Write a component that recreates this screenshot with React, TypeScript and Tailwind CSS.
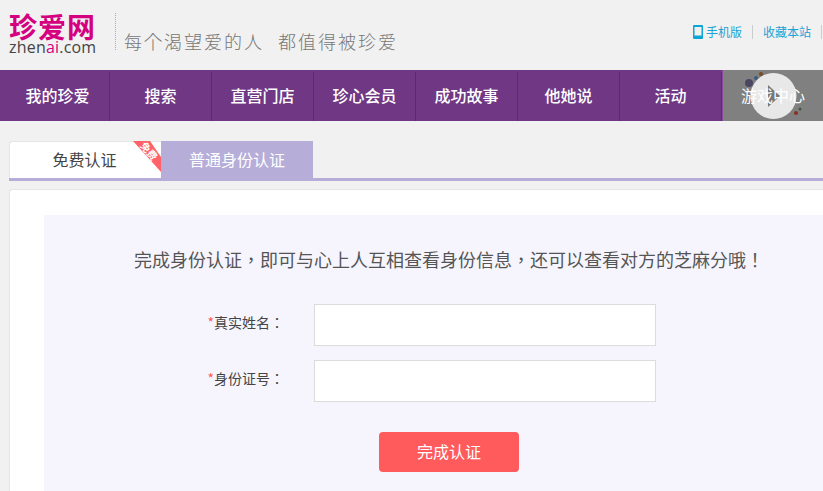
const cjk = "font-['Noto_Sans_CJK_SC',sans-serif]";

const navItems = [
  { label: "我的珍爱", width: "w-[110px]", pad: "pl-[6px]" },
  { label: "搜索", width: "w-[102px]", pad: "" },
  { label: "直营门店", width: "w-[102px]", pad: "" },
  { label: "珍心会员", width: "w-[102px]", pad: "" },
  { label: "成功故事", width: "w-[102px]", pad: "" },
  { label: "他她说", width: "w-[102px]", pad: "" },
  { label: "活动", width: "w-[102px]", pad: "" },
];

// centred full-width punctuation, the SC font sets it to the left of its cell
function Punct({ children }: { children: string }) {
  return <span className="font-['Noto_Sans_CJK_TC',sans-serif]">{children}</span>;
}

function Header() {
  return (
    <div className="flex h-[70px] items-start bg-[#f1f1f1]">
      <div className="ml-[9px] mt-[12px] w-[90px]">
        <div className="text-[28px] font-bold leading-[28px] tracking-[1px] whitespace-nowrap text-[#d4007f] font-['Noto_Sans_CJK_SC',serif]">
          珍爱网
        </div>
        <div className="text-[16px] leading-[14px] tracking-[0.2px] text-[#444] font-['Open_Sans',sans-serif]">
          zhen<span className="text-[#d4007f]">ai</span>.com
        </div>
      </div>
      <div className="ml-[16px] mt-[13px] h-[37px] border-l border-dotted border-[#aaa]" />
      <div className="ml-[8px] mt-[29px] whitespace-nowrap text-[18px] leading-6 tracking-[2px] text-[#777] font-['Noto_Sans_CJK_JP',sans-serif] font-light">
        每个渴望爱的人<span className="ml-[14px]">都值得被珍爱</span>
      </div>
      <div className="ml-auto mt-[24px] flex items-center text-xs leading-4 text-[#1ba3d6]">
        <svg width="10" height="14" viewBox="0 0 10 14" className="mr-[3px]">
          <path d="M1 0h8a1 1 0 0 1 1 1v12a1 1 0 0 1-1 1H1a1 1 0 0 1-1-1V1a1 1 0 0 1 1-1zm.5 2v8.500h7V2z" fill="#0ca6d6" fillRule="evenodd" />
        </svg>
        <span>手机版</span>
        <span className="mx-[10px] h-[14px] border-l border-[#ccc]" />
        <span>收藏本站</span>
        <span className="ml-[10px] mr-px h-[14px] border-l border-[#ccc]" />
      </div>
    </div>
  );
}

function Nav() {
  return (
    <div className="flex h-[51px] bg-[#6f3784] text-base font-medium text-white">
      {navItems.map((item) => (
        <div key={item.label} className={`${item.width} ${item.pad} mt-[2px] flex items-center justify-center border-r border-[#5b2a6f] pb-[4px]`}>
          {item.label}
        </div>
      ))}
      <div className="relative flex flex-1 items-center justify-center border-l border-[#8a4aa0] bg-[#808080]">
        <svg width="60" height="51" viewBox="0 0 60 51" className="absolute left-[21px] top-0">
          <circle cx="5" cy="13" r="4" fill="#4c4560" />
          <circle cx="12" cy="8" r="2" fill="#3d5a78" />
          <circle cx="17" cy="4" r="2" fill="#7a4a20" />
          <circle cx="56" cy="39" r="1.500" fill="#3d5a40" />
          <circle cx="52" cy="43" r="2" fill="#8a3020" />
          <circle cx="29.500" cy="26" r="23" fill="#fff" fillOpacity="0.82" />
          <path d="M24 15l12 11-12 11z" fill="#777" />
        </svg>
        <span className="relative pb-[1px] font-normal">游戏中心</span>
      </div>
    </div>
  );
}

function Tabs() {
  return (
    <div className="ml-[9px] mt-5 flex h-[40px] border-b-[3px] border-[#b6aed8]">
      <div className="relative flex h-[37px] w-[152px] items-center justify-center rounded-tl-sm border-l border-t border-[#e6e6e6] bg-white pr-[2px] pb-[2px] text-base text-[#444]">
        免费认证
        <div className="absolute -top-px right-0 h-[31px] w-[28px] bg-[#ff6268] [clip-path:polygon(0_0,17px_0,28px_16px,28px_31px)]" />
        <div className="absolute left-[127px] top-[3px] flex h-[12px] w-[24px] rotate-[50deg] items-center justify-center text-[10px] font-bold leading-none text-white">
          免费
        </div>
      </div>
      <div className="flex h-[37px] w-[152px] items-center justify-center bg-[#b6aed8] pb-[2px] text-base text-white">
        普通身份认证
      </div>
    </div>
  );
}

function Field({ label }: { label: string }) {
  return (
    <div className="flex h-[42px] items-center">
      <div className="w-[141px] pb-[6px] text-right text-sm text-[#444]">
        <span className="text-[#ff5a5c]">*</span>
        {label}
        <Punct>：</Punct>
      </div>
      <input aria-label={label} className="ml-[30px] h-[42px] w-[342px] border border-[#dcdcdc] bg-white" />
    </div>
  );
}

export default function App() {
  return (
    <div className={`${cjk} h-[491px] w-[823px] overflow-hidden bg-[#f1f1f1]`}>
      <Header />
      <Nav />
      <Tabs />
      <div className="ml-[9px] mt-2 w-[880px] rounded-t border-l border-t border-[#e6e6e6] bg-white pl-[34px] pt-[25px]">
        <div className="h-[300px] w-[810px] bg-[#f6f5fe] pt-[32px]">
          <p className="whitespace-nowrap text-center text-[18px] leading-6 text-[#555]">
            完成身份认证<Punct>，</Punct>即可与心上人互相查看身份信息<Punct>，</Punct>还可以查看对方的芝麻分哦<Punct>！</Punct>
          </p>
          <div className="ml-[-1px] mt-[33px] flex flex-col gap-[14px] pl-[100px]">
            <Field label="真实姓名" />
            <Field label="身份证号" />
          </div>
          <button className="ml-[335px] mt-[30px] h-10 w-[140px] rounded-sm bg-[#ff5a5c] pb-[2px] text-base text-white">
            完成认证
          </button>
        </div>
      </div>
    </div>
  );
}
